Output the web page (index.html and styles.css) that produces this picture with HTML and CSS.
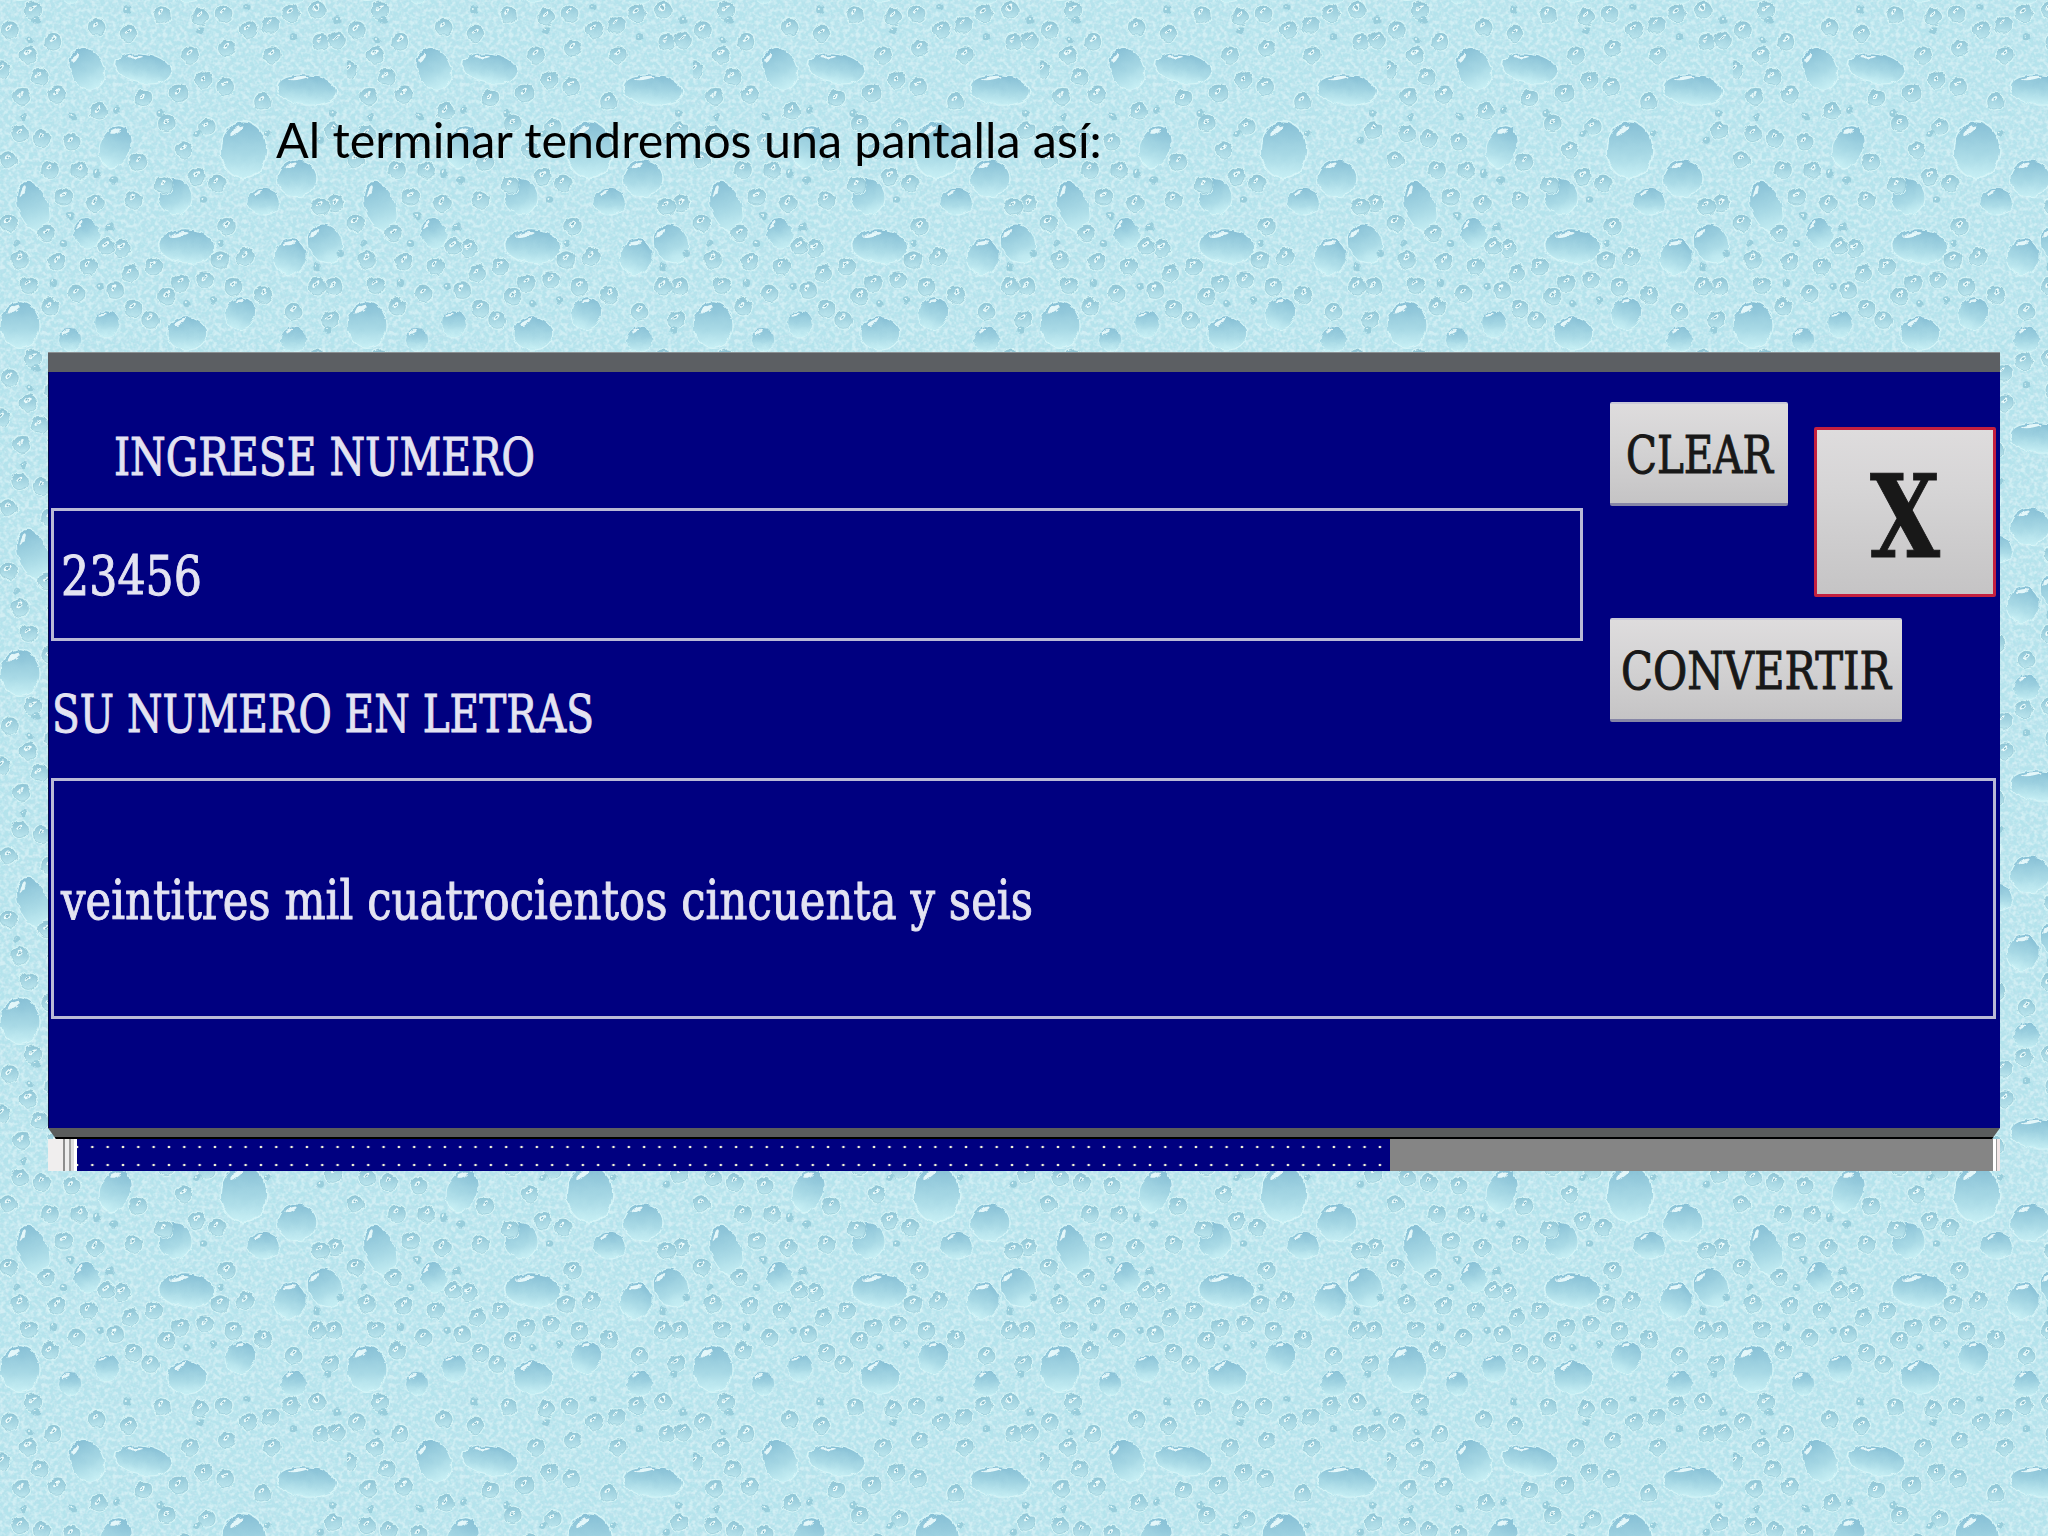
FILE: index.html
```html
<!DOCTYPE html>
<html lang="es">
<head>
<meta charset="utf-8">
<title>Al terminar tendremos una pantalla así</title>
<link rel="stylesheet" href="styles.css">
</head>
<body>
<main class="slide">
  <h1 class="slide-title">Al terminar tendremos una pantalla así:</h1>
  <section class="window">
    <div class="titlebar"></div>
    <div class="client">
      <div class="top">
        <div class="inputs">
          <div class="label label-first"><svg class="txt" width="421" height="60"><text x="0" y="45" textLength="421" lengthAdjust="spacingAndGlyphs">INGRESE NUMERO</text></svg></div>
          <div class="field field-number"><svg class="txt txt-field" width="141" height="70"><text x="0" y="55" textLength="141" lengthAdjust="spacingAndGlyphs">23456</text></svg></div>
          <div class="label label-second"><svg class="txt" width="542" height="60"><text x="0" y="43" textLength="542" lengthAdjust="spacingAndGlyphs">SU NUMERO EN LETRAS</text></svg></div>
        </div>
        <div class="actions">
          <button class="btn btn-clear"><svg class="txt" width="147" height="60"><text x="0" y="48.5" textLength="147" lengthAdjust="spacingAndGlyphs">CLEAR</text></svg></button>
          <button class="btn btn-close"><svg class="txt txt-x" width="70" height="120"><text x="0" y="105" textLength="70" lengthAdjust="spacingAndGlyphs">X</text></svg></button>
          <button class="btn btn-convert"><svg class="txt" width="270" height="60"><text x="0" y="48.5" textLength="270" lengthAdjust="spacingAndGlyphs">CONVERTIR</text></svg></button>
        </div>
      </div>
      <div class="field field-result"><svg class="txt txt-field" width="972" height="70"><text x="0" y="55" textLength="972" lengthAdjust="spacingAndGlyphs">veintitres mil cuatrocientos cincuenta y seis</text></svg></div>
    </div>
    <div class="footbar"></div>
    <div class="statusbar">
      <div class="grip"></div>
      <div class="progress"></div>
      <div class="rest"></div>
      <div class="end"></div>
    </div>
  </section>
</main>
</body>
</html>
```
FILE: styles.css
```css
* { box-sizing: border-box; }
html, body { margin: 0; padding: 0; }
body { width: 2048px; height: 1536px; overflow: hidden; background: #b9e7ef; }

.slide {
  width: 2048px;
  height: 1536px;
  padding-top: 122px;
  background-color: #b4e3ec;
  background-size: 346.67px 348px;
  background-image: url("data:image/svg+xml,<svg xmlns='http://www.w3.org/2000/svg' viewBox='0 0 1040 1044' width='1040' height='1044'><defs><filter id='n' x='0' y='0' width='1' height='1'><feTurbulence type='fractalNoise' baseFrequency='.07' numOctaves='3' stitchTiles='stitch'/><feColorMatrix values='0 0 0 0 .5 0 0 0 0 .76 0 0 0 0 .84 3 0 0 0 -1.2'/></filter><filter id='w' x='0' y='0' width='1' height='1'><feTurbulence type='fractalNoise' baseFrequency='.08' numOctaves='2' seed='7' stitchTiles='stitch'/><feColorMatrix values='0 0 0 0 .86 0 0 0 0 .97 0 0 0 0 .98 3.4 0 0 0 -1.4'/></filter><filter id='d' filterUnits='userSpaceOnUse' x='-40' y='-40' width='1120' height='1124'><feTurbulence type='fractalNoise' baseFrequency='.04' numOctaves='2' stitchTiles='stitch' result='t'/><feDisplacementMap in='SourceGraphic' in2='t' scale='16' xChannelSelector='R' yChannelSelector='G'/></filter><linearGradient id='g' x2='0' y2='1'><stop stop-color='%2386bfd5'/><stop offset='.6' stop-color='%23a9dae6'/><stop offset='1' stop-color='%23c8f0f5'/></linearGradient><linearGradient id='h' x2='0' y2='1'><stop stop-color='%238fc5d6'/><stop offset='1' stop-color='%23bce6ee'/></linearGradient><g id='l'><circle r='50' fill='url(%23g)' stroke='%23d6f5f8' stroke-width='3'/><ellipse cx='-16' cy='-34' rx='17' ry='5' transform='rotate(-28 -16 -34)' fill='%23f2ffff' opacity='.85'/></g><g id='m'><circle r='28' fill='none' stroke='%23d8f6f8' stroke-width='3'/><circle r='25' fill='url(%23h)' stroke='%238dc0ce' stroke-width='1.5'/><ellipse cx='-2' cy='-8' rx='11' ry='5' transform='rotate(-45 -2 -8)' fill='%23eefdfd'/><ellipse cx='-2' cy='-8' rx='5' ry='2' transform='rotate(-45 -2 -8)' fill='%237cb5c6'/></g><g id='t'><circle r='11' fill='%2398cddb'/><circle cx='-3' cy='-3' r='3' fill='%23e6fbfc'/></g></defs><rect width='1040' height='1044' filter='url(%23n)' opacity='.8'/><rect width='1040' height='1044' filter='url(%23w)' opacity='.45'/><g filter='url(%23d)'><use href='%23l' transform='translate(260 205) rotate(-25) scale(1 1.3)'/><use href='%23l' transform='translate(430 205) rotate(10) scale(1.7 .9)'/><use href='%23l' transform='translate(920 270) rotate(5) scale(1.8 .9)'/><use href='%23l' transform='translate(730 450) scale(1.4 1.7)'/><use href='%23l' transform='translate(890 535) scale(1.2 1.1)'/><use href='%23l' transform='translate(345 440) rotate(20) scale(.9 1.3)'/><use href='%23l' transform='translate(100 620) rotate(-20) scale(.9 1.6)'/><use href='%23l' transform='translate(525 590) rotate(-20) scale(1 1.1)'/><use href='%23l' transform='translate(790 605) scale(1 .8)'/><use href='%23l' transform='translate(560 740) rotate(5) scale(1.7 1)'/><use href='%23l' transform='translate(260 700) rotate(-20) scale(.8 .9)'/><use href='%23l' transform='translate(975 730) rotate(-25) scale(1 1.2)'/><use href='%23l' transform='translate(870 770) rotate(20) scale(1 1.1)'/><use href='%23l' transform='translate(60 975) scale(1.2 1.4)'/><use href='%23l' transform='translate(60 -69) scale(1.2 1.4)'/><use href='%23l' transform='translate(560 1000) scale(1.2 1)'/><use href='%23l' transform='translate(560 -44) scale(1.2 1)'/><use href='%23l' transform='translate(720 940) rotate(20) scale(.9 1)'/><use href='%23l' transform='translate(320 970) scale(.8)'/><use href='%23l' transform='translate(210 1020) scale(.7)'/><use href='%23l' transform='translate(210 -24) scale(.7)'/><use href='%23l' transform='translate(880 1020) scale(.8)'/><use href='%23l' transform='translate(880 -24) scale(.8)'/><use href='%23m' transform='translate(30 90)'/><use href='%23m' transform='translate(160 125)'/><use href='%23m' transform='translate(290 80)'/><use href='%23m' transform='translate(485 45)'/><use href='%23m' transform='translate(670 40)'/><use href='%23m' transform='translate(810 75)'/><use href='%23m' transform='translate(950 30)'/><use href='%23m' transform='translate(570 165)'/><use href='%23m' transform='translate(680 145)'/><use href='%23m' transform='translate(815 165)'/><use href='%23m' transform='translate(960 125)'/><use href='%23m' transform='translate(5 210)'/><use href='%23m' transform='translate(170 285)'/><use href='%23m' transform='translate(65 290)'/><use href='%23m' transform='translate(295 335)'/><use href='%23m' transform='translate(430 295)'/><use href='%23m' transform='translate(535 280)'/><use href='%23m' transform='translate(675 260)'/><use href='%23m' transform='translate(785 305)'/><use href='%23m' transform='translate(25 480)'/><use href='%23m' transform='translate(125 415)'/><use href='%23m' transform='translate(215 425)'/><use href='%23m' transform='translate(415 485)'/><use href='%23m' transform='translate(150 510)'/><use href='%23m' transform='translate(550 450)'/><use href='%23m' transform='translate(590 530)'/><use href='%23m' transform='translate(490 555)'/><use href='%23m' transform='translate(285 610)'/><use href='%23m' transform='translate(400 600)'/><use href='%23m' transform='translate(1005 610)'/><use href='%23m' transform='translate(25 670)'/><use href='%23m' transform='translate(680 680)'/><use href='%23m' transform='translate(365 745)'/><use href='%23m' transform='translate(735 770)'/><use href='%23m' transform='translate(170 785)'/><use href='%23m' transform='translate(460 800)'/><use href='%23m' transform='translate(615 840)'/><use href='%23m' transform='translate(265 800)'/><use href='%23m' transform='translate(85 855)'/><use href='%23m' transform='translate(390 820)'/><use href='%23m' transform='translate(230 880)'/><use href='%23m' transform='translate(500 890)'/><use href='%23m' transform='translate(345 870)'/><use href='%23m' transform='translate(790 885)'/><use href='%23m' transform='translate(880 935)'/><use href='%23m' transform='translate(400 925)'/><use href='%23m' transform='translate(1000 860)'/><use href='%23m' transform='translate(100 30)'/><use href='%23m' transform='translate(385 100)'/><use href='%23m' transform='translate(870 40)'/><use href='%23m' transform='translate(745 90)'/><use href='%23m' transform='translate(600 50)'/><use href='%23m' transform='translate(1010 120)'/><use href='%23m' transform='translate(85 165)'/><use href='%23m' transform='translate(120 230)'/><use href='%23m' transform='translate(610 240)'/><use href='%23m' transform='translate(1000 390)'/><use href='%23m' transform='translate(60 400)'/><use href='%23m' transform='translate(500 370)'/><use href='%23m' transform='translate(620 380)'/><use href='%23m' transform='translate(240 510)'/><use href='%23m' transform='translate(650 550)'/><use href='%23m' transform='translate(190 590)'/><use href='%23m' transform='translate(960 620)'/><use href='%23m' transform='translate(140 700)'/><use href='%23m' transform='translate(660 780)'/><use href='%23m' transform='translate(320 740)'/><use href='%23m' transform='translate(60 780)'/><use href='%23m' transform='translate(540 850)'/><use href='%23m' transform='translate(700 860)'/><use href='%23m' transform='translate(950 860)'/><use href='%23m' transform='translate(150 920)'/><use href='%23m' transform='translate(450 960)'/><use href='%23m' transform='translate(990 960)'/><use href='%23t' transform='translate(110 60)'/><use href='%23t' transform='translate(380 30)'/><use href='%23t' transform='translate(600 90)'/><use href='%23t' transform='translate(740 20)'/><use href='%23t' transform='translate(880 110)'/><use href='%23t' transform='translate(1010 60)'/><use href='%23t' transform='translate(90 120)'/><use href='%23t' transform='translate(1000 340)'/><use href='%23t' transform='translate(350 330)'/><use href='%23t' transform='translate(480 340)'/><use href='%23t' transform='translate(220 350)'/><use href='%23t' transform='translate(70 350)'/><use href='%23t' transform='translate(590 400)'/><use href='%23t' transform='translate(800 400)'/><use href='%23t' transform='translate(960 420)'/><use href='%23t' transform='translate(290 520)'/><use href='%23t' transform='translate(610 600)'/><use href='%23t' transform='translate(210 650)'/><use href='%23t' transform='translate(340 540)'/><use href='%23t' transform='translate(190 730)'/><use href='%23t' transform='translate(330 680)'/><use href='%23t' transform='translate(660 730)'/><use href='%23t' transform='translate(50 730)'/><use href='%23t' transform='translate(300 860)'/><use href='%23t' transform='translate(160 850)'/><use href='%23t' transform='translate(560 910)'/><use href='%23t' transform='translate(640 900)'/><use href='%23t' transform='translate(950 800)'/><use href='%23t' transform='translate(1020 760)'/><use href='%23t' transform='translate(980 990)'/></g></svg>");
}

.slide-title {
  margin: 0 0 195px 276px;
  height: 35px;
  font-family: "Lato", "Liberation Sans", sans-serif;
  font-size: 48.4px;
  line-height: 35px;
  font-weight: 400;
  color: #000;
}

.window {
  width: 1952px;
  margin-left: 48px;
}

.titlebar {
  height: 20px;
  background: #5c5f63;
  border-top: 1px solid #8b8f92;
}

.client {
  height: 756px;
  padding: 0 4px 0 2px;
  background: #000080;
  border-left: 1px solid #0a0a40;
  color: #e3e3f2;
}

.txt {
  display: block;
  overflow: visible;
  font-family: "DejaVu Serif", "Liberation Serif", serif;
  font-size: 52px;
  fill: currentColor;
  stroke: currentColor;
  stroke-width: 1px;
}
.txt-field { font-size: 55px; }
.txt-x { font-size: 115px; font-weight: 700; }

.top {
  display: flex;
  gap: 27px;
  height: 406px;
}

.inputs { width: 1533px; }

.label-first { height: 136px; padding: 58px 0 0 63px; }
.label-second { padding: 48px 0 0 1px; }

.field {
  display: flex;
  align-items: center;
  padding-left: 7px;
  border: 3px solid #b9b9d6;
}
.field-number { height: 133px; }
.field-result { height: 241px; }

.actions {
  display: grid;
  grid-template-columns: 204px 182px;
  grid-template-rows: 195px 104px;
  row-gap: 21px;
  padding-top: 30px;
  align-items: start;
}

.btn {
  margin: 0;
  padding: 0;
  display: flex;
  align-items: center;
  justify-content: center;
  color: #181818;
  border: 0;
  border-top: 2px solid #c9c9d8;
  border-bottom: 3px solid #8686a6;
  border-radius: 2px;
  background: linear-gradient(#dedcdd, #d6d5d6 35%, #c5c4c5);
}
.btn-clear { grid-column: 1; grid-row: 1; width: 178px; height: 104px; }
.btn-close {
  grid-column: 2;
  grid-row: 1;
  width: 182px;
  height: 170px;
  margin-top: 25px;
  border: 3px solid #c4203f;
}
.btn-convert { grid-column: 1 / span 2; grid-row: 2; width: 292px; height: 104px; }

.footbar {
  height: 11px;
  background: #5a5c5c;
  border-bottom: 2px solid #000;
  clip-path: polygon(0 0, 100% 0, calc(100% - 8px) 100%, 8px 100%);
}

.statusbar {
  display: flex;
  height: 32px;
  background: #efefef;
}
.grip {
  width: 29px;
  background: linear-gradient(90deg, #f0eeee 0 15px, #8e8e8e 15px 17px, #eee 17px 21px, #a0a0a0 21px 23px, #ddd 23px 26px, #fff 26px 29px);
}
.progress {
  width: 1313px;
  background-color: #000080;
  background-image: radial-gradient(circle, #f3f3d8 1.3px, transparent 1.6px);
  background-size: 15.33px 18px;
  background-position: -7.67px -1px;
}
.rest { flex: 1; background: #858585; }
.end {
  width: 7px;
  background: linear-gradient(90deg, #fff 0 3px, #9a9a9a 3px 4px, #f2e6e6 4px 7px);
}
```
